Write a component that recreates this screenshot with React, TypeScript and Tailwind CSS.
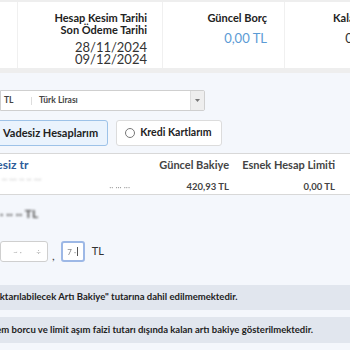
import React from "react";

const font = { fontFamily: 'Lato, "Noto Sans", sans-serif' };

export default function App() {
  return (
    <div
      className="w-[350px] h-[350px] overflow-hidden bg-[#f4f7fc] text-[#333]"
      style={font}
    >
      {/* Summary card */}
      <div className="bg-[#eeeeee] pt-[2px] pb-[5px]">
        <div className="flex h-[66px] w-[600px] bg-white">
          <div className="w-[18px] border-r border-[#f0f0f0]" />
          <div className="w-[145px] border-r border-[#f0f0f0] pr-[15px] pt-[10px] text-right">
            <div className="text-[11px] leading-[12px] font-bold text-[#222]">
              Hesap Kesim Tarihi
              <br />
              Son Ödeme Tarihi
            </div>
            <div className="mt-[5px] text-[13px] leading-[12px] text-[#333]">
              28/11/2024
              <br />
              09/12/2024
            </div>
          </div>
          <div className="w-[122px] border-r border-[#f0f0f0] pr-[17px] pt-[10px] text-right">
            <div className="text-[11px] leading-[12px] font-bold text-[#222]">
              Güncel Borç
            </div>
            <div className="mt-[8px] text-[13px] leading-[12px] text-[#5b9bd5]">
              0,00 TL
            </div>
          </div>
          <div className="w-[120px] pr-[17px] pt-[10px] text-right">
            <div className="text-[11px] leading-[12px] font-bold text-[#222]">
              Kalan Limit
            </div>
            <div className="mt-[8px] text-[13px] leading-[12px] text-[#333]">
              0,00 TL
            </div>
          </div>
        </div>
      </div>

      {/* Currency select */}
      <div className="mt-[17px] flex h-[21px] w-[205px] items-center rounded-r-[2px] border border-[#cfcfcf] bg-white">
        <span className="w-[30px] pl-[3px] text-[8.5px] font-bold text-[#444]">TL</span>
        <span className="h-[8px] border-l border-[#ddd]" />
        <span className="flex-1 pl-[7px] text-[8.5px] font-bold text-[#444]">Türk Lirası</span>
        <div className="flex h-full w-[14px] items-center justify-center border-l border-[#ddd] bg-[#eeeeee]">
          <svg width="5" height="3" viewBox="0 0 5 3">
            <path d="M0 0h5L2.5 3z" fill="#777" />
          </svg>
        </div>
      </div>

      {/* Account type toggle */}
      <div className="mt-[9px] flex gap-[8px]">
        <button className="-ml-[20px] flex h-[26px] items-center gap-[4px] rounded-[3px] border border-[#9dc2e8] bg-[#eaf3fd] pl-[8px] pr-[9px] text-[11px] font-bold text-[#222]">
          <span className="inline-block h-[10px] w-[10px] rounded-full border-[3px] border-[#2d6cb5] bg-white" />
          Vadesiz Hesaplarım
        </button>
        <button className="flex h-[26px] items-center gap-[5px] rounded-[3px] border border-[#dcdcdc] bg-white pl-[8px] pr-[9px] text-[10.5px] font-bold text-[#222]">
          <span className="inline-block h-[10px] w-[10px] rounded-full border border-[#777]" />
          Kredi Kartlarım
        </button>
      </div>

      {/* Account table */}
      <div className="mt-[7px] h-[42px] border-t border-b border-[#d8d8d8] bg-white">
        <div className="flex pt-[4px] text-[11px] font-bold leading-[14px] whitespace-nowrap">
          <div className="-ml-[24px] w-[154px] text-[12px] text-[#2d5c99]">Vadesiz tr</div>
          <div className="w-[99px] text-right text-[#444]">Güncel Bakiye</div>
          <div className="w-[106px] text-right text-[#444]">Esnek Hesap Limiti</div>
        </div>
        <div className="flex text-[9.5px] leading-[14px]">
          <div className="w-[76px] pl-[2px] text-[#bbb] blur-[1px]">·· ··· ·· ·· ···</div>
          <div className="w-[54px] pt-[8px] text-right text-[8px] text-[#999] blur-[0.6px]">·· ··· ···</div>
          <div className="w-[99px] pt-[8px] text-right font-bold text-[#444]">420,93 TL</div>
          <div className="w-[106px] pt-[8px] text-right font-bold text-[#444]">0,00 TL</div>
        </div>
      </div>

      {/* Amount */}
      <div className="mt-[10px] w-[45px] text-[12px] font-bold text-[#555] blur-[0.8px]">· ·· ·· TL</div>
      <div className="mt-[18px] flex items-end gap-[4px]">
        <div className="flex h-[21px] w-[48px] items-center justify-between rounded-[3px] border border-[#cfcfcf] bg-white px-[6px] text-[8px] text-[#aaa]">
          <span className="ml-[6px] blur-[0.5px]">~ ·</span>
          <span className="blur-[0.5px]">÷</span>
        </div>
        <span className="text-[12px] leading-[12px] text-[#444]">,</span>
        <div className="ml-[2px] flex h-[21px] w-[24px] items-center justify-center rounded-[3px] border-2 border-[#9db8e6] bg-white text-[8px] text-[#888]">
          <span className="blur-[0.4px]">7 ·</span>
          <span className="ml-[1px] h-[9px] border-l border-[#555]" />
        </div>
        <span className="ml-[3px] self-center text-[11px] text-[#333]">TL</span>
      </div>

      {/* Info notes */}
      <div className="mt-[23px] flex h-[25px] items-center whitespace-nowrap bg-[#e1e6ee] text-[9.5px] font-bold text-[#222]">
        <span className="-ml-[10px]">"Aktarılabilecek Artı Bakiye" tutarına dahil edilmemektedir.</span>
      </div>
      <div className="mt-[7px] flex h-[26px] items-center whitespace-nowrap bg-[#e1e6ee] text-[9.5px] font-bold text-[#222]">
        <span className="-ml-[100px]">Hesap ekstresinde dönem borcu ve limit aşım faizi tutarı dışında kalan artı bakiye gösterilmektedir.</span>
      </div>
    </div>
  );
}
